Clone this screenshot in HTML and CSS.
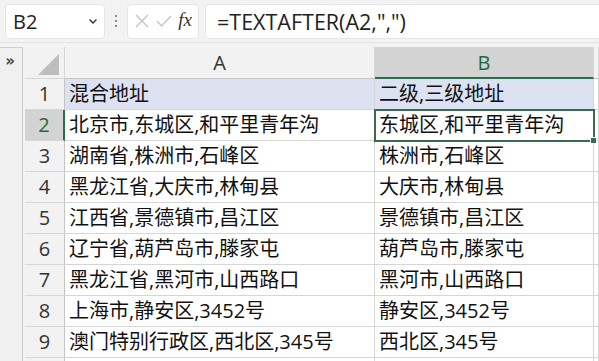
FILE: index.html
```html
<!DOCTYPE html>
<html lang="zh-CN">
<head>
    <meta charset="UTF-8">
    <title>TEXTAFTER</title>
    <link rel="stylesheet" href="styles.css">
</head>
<body>
    <div class="toolbar">
        <div class="namebox">
            <span>B2</span>
            <svg class="chevron" width="10" height="7" viewBox="0 0 10 7"><path d="M1.5 1.5 L5 5 L8.5 1.5" fill="none" stroke="#333" stroke-width="1.4"/></svg>
        </div>
        <div class="dots"><i></i><i></i><i></i></div>
        <div class="fxbox">
            <svg width="14" height="14" viewBox="0 0 14 14"><path d="M1 1 L13 13 M13 1 L1 13" stroke="#c4c4c4" stroke-width="1.4" fill="none"/></svg>
            <svg width="16" height="14" viewBox="0 0 16 14"><path d="M1 7 L5.5 12 L15 2" stroke="#c4c4c4" stroke-width="1.4" fill="none"/></svg>
            <span class="fx">fx</span>
        </div>
        <div class="formula">=TEXTAFTER(A2,",")</div>
    </div>

    <div class="main">
        <div class="panel"><span>&raquo;</span></div>
        <div class="sheet">
            <div class="corner"><svg width="22" height="21" viewBox="0 0 22 21"><polygon points="21,0 21,21 0,21" fill="#bdbdbd"/></svg></div>
            <div class="colhead">A</div>
            <div class="colhead sel">B</div>
            <div class="colhead rest"></div>

            <div class="rowhead">1</div>
            <div class="cell title">混合地址</div>
            <div class="cell title">二级,三级地址</div>
            <div class="cell rest"></div>

            <div class="rowhead sel">2</div>
            <div class="cell">北京市,东城区,和平里青年沟</div>
            <div class="cell active">东城区,和平里青年沟</div>
            <div class="cell rest"></div>

            <div class="rowhead">3</div>
            <div class="cell">湖南省,株洲市,石峰区</div>
            <div class="cell">株洲市,石峰区</div>
            <div class="cell rest"></div>

            <div class="rowhead">4</div>
            <div class="cell">黑龙江省,大庆市,林甸县</div>
            <div class="cell">大庆市,林甸县</div>
            <div class="cell rest"></div>

            <div class="rowhead">5</div>
            <div class="cell">江西省,景德镇市,昌江区</div>
            <div class="cell">景德镇市,昌江区</div>
            <div class="cell rest"></div>

            <div class="rowhead">6</div>
            <div class="cell">辽宁省,葫芦岛市,滕家屯</div>
            <div class="cell">葫芦岛市,滕家屯</div>
            <div class="cell rest"></div>

            <div class="rowhead">7</div>
            <div class="cell">黑龙江省,黑河市,山西路口</div>
            <div class="cell">黑河市,山西路口</div>
            <div class="cell rest"></div>

            <div class="rowhead">8</div>
            <div class="cell">上海市,静安区,3452号</div>
            <div class="cell">静安区,3452号</div>
            <div class="cell rest"></div>

            <div class="rowhead">9</div>
            <div class="cell">澳门特别行政区,西北区,345号</div>
            <div class="cell">西北区,345号</div>
            <div class="cell rest"></div>

            <div class="rowhead"></div>
            <div class="cell"></div>
            <div class="cell"></div>
            <div class="cell rest"></div>
        </div>
    </div>
</body>
</html>
```

FILE: styles.css
```css
/* Excel-like sheet view */
body {
    margin: 0;
    background-color: #f3f3f3;
    font-family: "Open Sans", "Noto Sans CJK SC", sans-serif;
    color: #222;
    overflow: hidden;
}

.toolbar {
    display: flex;
    align-items: center;
    height: 43px;
    padding: 0 0 0 5px;
    border-bottom: 1px solid #e2e2e2;
    box-sizing: border-box;
}
.namebox, .fxbox, .formula {
    height: 35px;
    background: #fff;
    border: 1px solid #e4e4e4;
    border-radius: 4px;
    box-sizing: border-box;
    display: flex;
    align-items: center;
}
.namebox {
    width: 100px;
    padding: 0 6px 0 7px;
    justify-content: space-between;
    font-size: 20px;
}
.dots {
    width: 22px;
    display: flex;
    flex-direction: column;
    align-items: center;
    gap: 3px;
}
.dots i {
    width: 2px;
    height: 2px;
    background: #8a8a8a;
}
.fxbox {
    width: 72px;
    padding: 0 6px 0 7px;
    justify-content: space-between;
}
.fx {
    font-family: "Liberation Serif", serif;
    font-style: italic;
    font-size: 19px;
    color: #333;
    margin-top: -2px;
}
.formula {
    flex: 1;
    margin-left: 6px;
    padding-left: 11px;
    font-size: 21.5px;
    border-right: none;
    border-radius: 4px 0 0 4px;
}

.main {
    display: flex;
    margin-top: 4px;
    height: 314px;
}
.panel {
    width: 24px;
    background: #f0f0f0;
    border-top: 1px solid #d0d0d0;
    border-right: 1px solid #c8c8c8;
    font-family: "DejaVu Sans", sans-serif;
    font-weight: bold;
    font-size: 15px;
    color: #444;
    text-align: center;
}
.panel span {
    display: block;
    margin-top: 4px;
    margin-left: -2px;
}

.sheet {
    flex: 1;
    margin-left: 2px;
    display: grid;
    grid-template-columns: 40px 310px 219px 1fr;
    grid-template-rows: 32px;
    grid-auto-rows: 31px;
    background: #fff;
    font-family: "Open Sans", "Noto Sans CJK SC", sans-serif;
    font-size: 20px;
}
.sheet > div {
    border-right: 1px solid #d6d6d6;
    border-bottom: 1px solid #d6d6d6;
    box-sizing: border-box;
}
.corner {
    background: #f2f2f2;
    display: flex;
    justify-content: flex-end;
    align-items: flex-end;
    padding: 0 4px 3px 0;
}
.corner svg {
    display: block;
}
.colhead {
    background: #f2f2f2;
    text-align: center;
    line-height: 32px;
    color: #333;
    border-bottom-color: #c4c4c4 !important;
}
.colhead.sel {
    background: #d3d3d3;
    color: #1e6a40;
    border-bottom: 2px solid #2a6f49 !important;
}
.rowhead {
    background: #f2f2f2;
    text-align: center;
    line-height: 30px;
    color: #333;
    border-right-color: #c4c4c4 !important;
}
.rowhead.sel {
    background: #d3d3d3;
    color: #1e6a40;
    border-right: 2px solid #2a6f49 !important;
}
.cell {
    padding-left: 4px;
    line-height: 30px;
    white-space: nowrap;
    color: #111;
}
.cell.title {
    background: #dde2f3;
}
.cell.active {
    position: relative;
    outline: 2px solid #3a6b52;
    outline-offset: -1px;
}
.cell.active::after {
    content: "";
    position: absolute;
    right: -4px;
    bottom: -4px;
    width: 5px;
    height: 5px;
    background: #3a6b52;
    border: 1px solid #fff;
}
```
